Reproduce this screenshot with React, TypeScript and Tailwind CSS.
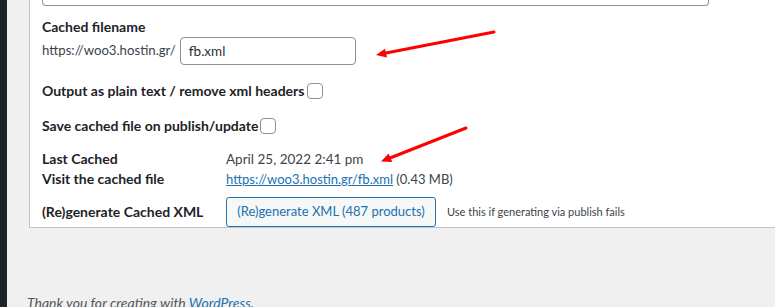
export default function App() {
  const font = { fontFamily: 'Lato, "Noto Sans", sans-serif' };
  return (
    <div className="relative flex h-[307px] w-[775px] overflow-hidden bg-[#f0f0f1] text-[14px] text-[#1d2327]" style={font}>
      {/* admin sidebar edge */}
      <div className="w-[7px] shrink-0 bg-[#1d2327]" />

      <div className="flex flex-1 flex-col pl-[22px]">
        {/* settings panel */}
        <div className="h-[241px] border-b border-l border-[#c3c4c7] bg-white pl-[12px]">
          <div className="h-[6px] w-[667px] rounded-b-[4px] border border-t-0 border-[#8c8f94]" />

          <div className="mt-[11px] font-bold leading-5">Cached filename</div>
          <div className="flex items-center gap-[4px]">
            <span className="text-[13.2px] text-[#3c434a]">https://woo3.hostin.gr/</span>
            <div className="flex h-[28px] w-[176px] items-center rounded-[4px] border border-[#8c8f94] px-[8px] text-[13.5px] text-[#2c3338]">
              fb.xml
            </div>
          </div>

          <div className="mt-[16px] flex items-center gap-[3px]">
            <span className="font-bold leading-5">Output as plain text / remove xml headers</span>
            <span className="h-[16px] w-[16px] rounded-[4px] border border-[#8c8f94]" />
          </div>

          <div className="mt-[15px] flex items-center gap-[2px]">
            <span className="font-bold leading-5">Save cached file on publish/update</span>
            <span className="h-[16px] w-[16px] rounded-[4px] border border-[#8c8f94]" />
          </div>

          <div className="mt-[13px] grid grid-cols-[184px_1fr] leading-5">
            <div className="font-bold">Last Cached</div>
            <div className="text-[13.5px] text-[#3c434a]">April 25, 2022 2:41 pm</div>
            <div className="font-bold">Visit the cached file</div>
            <div className="text-[13px] text-[#3c434a]">
              <span className="text-[#2271b1] underline">https://woo3.hostin.gr/fb.xml</span> (0.43 MB)
            </div>
          </div>

          <div className="mt-[8px] grid grid-cols-[184px_1fr] items-center">
            <div className="font-bold leading-5">(Re)generate Cached XML</div>
            <div className="flex items-center gap-[11px]">
              <button className="h-[30px] w-[210px] rounded-[3px] border border-[#2271b1] bg-[#f6f7f7] text-[13px] text-[#2271b1]">
                (Re)generate XML (487 products)
              </button>
              <span className="text-[11px] text-[#3c434a]">Use this if generating via publish fails</span>
            </div>
          </div>
        </div>

        <div className="mt-[64px] -ml-[2px] text-[14px] italic text-[#50575e]">
          Thank you for creating with <span className="text-[#2271b1] underline">WordPress</span>.
        </div>
      </div>

      {/* annotation arrows */}
      <svg className="pointer-events-none absolute inset-0" width="775" height="307">
        <line x1="494" y1="32" x2="386" y2="53" stroke="#ff0000" strokeWidth="3" strokeLinecap="round" />
        <polygon points="376,55 387,57.5 385,48.7" fill="#ff0000" />
        <line x1="466" y1="128" x2="390" y2="158" stroke="#ff0000" strokeWidth="3" strokeLinecap="round" />
        <polygon points="381,161.5 392.3,162 388.5,153.6" fill="#ff0000" />
      </svg>
    </div>
  );
}
